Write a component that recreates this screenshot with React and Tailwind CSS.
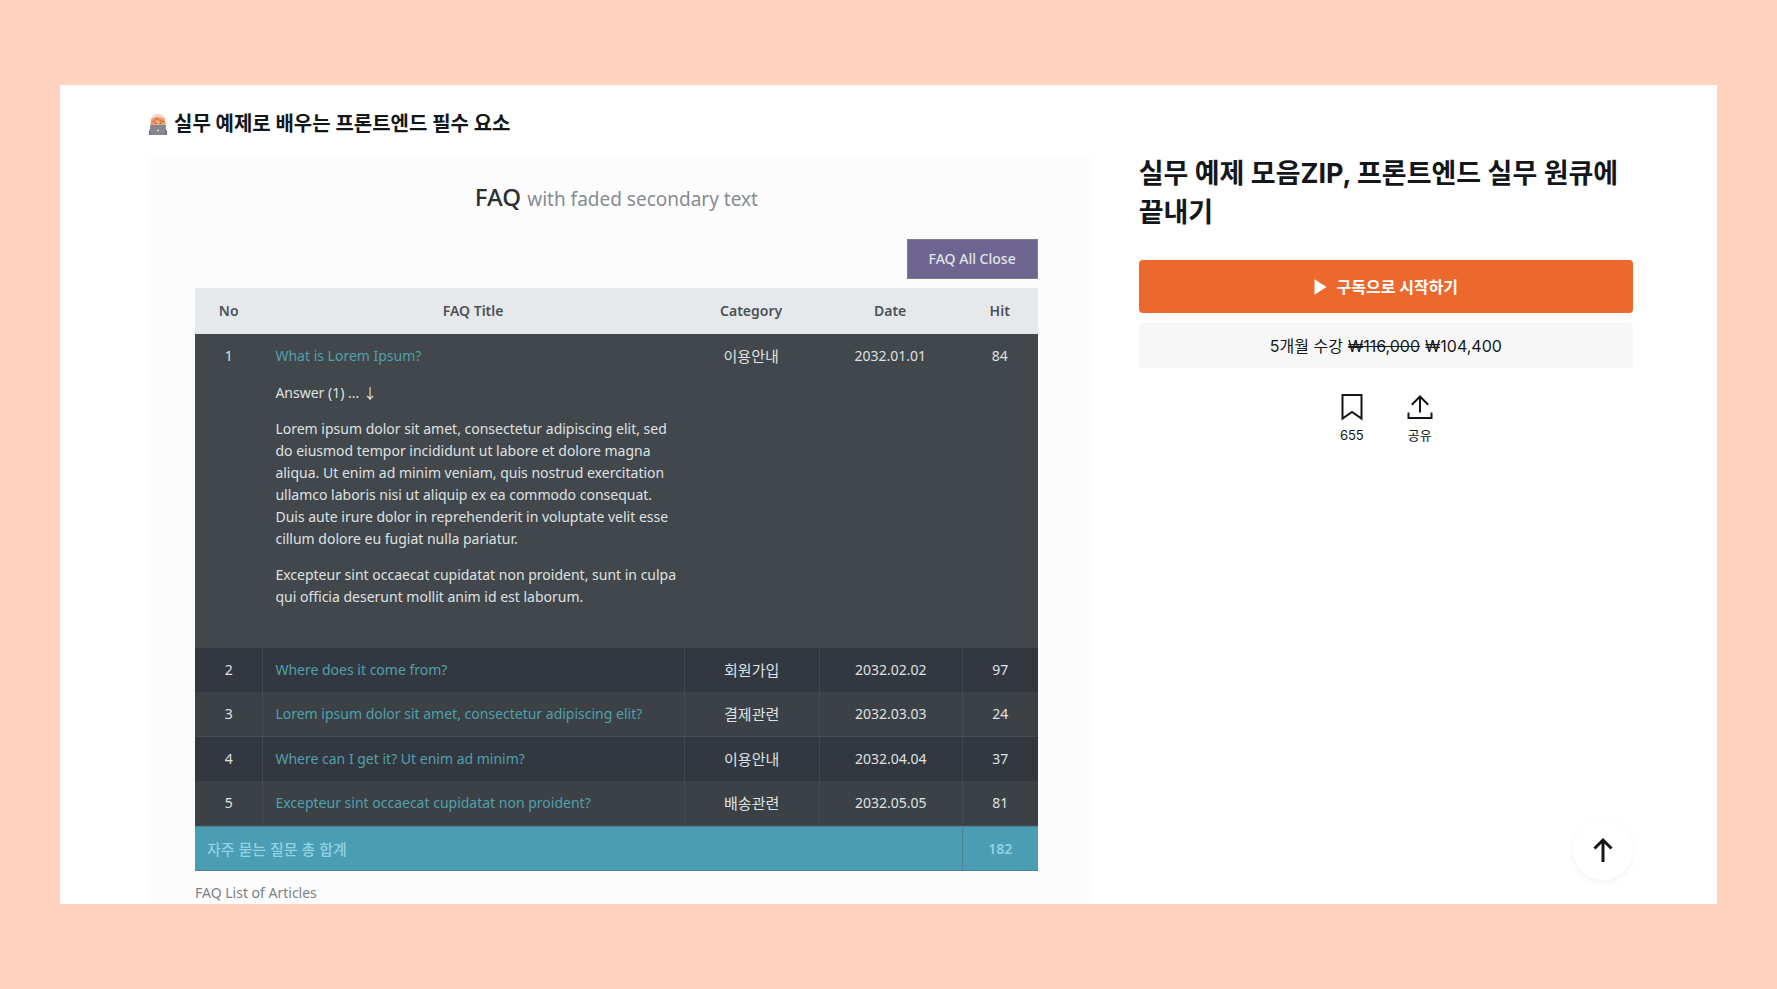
const faqs = [
  {
    no: 1,
    title: "What is Lorem Ipsum?",
    category: "이용안내",
    date: "2032.01.01",
    hit: 84,
    answer: [
      "Answer (1) ... ↓",
      "Lorem ipsum dolor sit amet, consectetur adipiscing elit, sed do eiusmod tempor incididunt ut labore et dolore magna aliqua. Ut enim ad minim veniam, quis nostrud exercitation ullamco laboris nisi ut aliquip ex ea commodo consequat. Duis aute irure dolor in reprehenderit in voluptate velit esse cillum dolore eu fugiat nulla pariatur.",
      "Excepteur sint occaecat cupidatat non proident, sunt in culpa qui officia deserunt mollit anim id est laborum.",
    ],
  },
  { no: 2, title: "Where does it come from?", category: "회원가입", date: "2032.02.02", hit: 97 },
  { no: 3, title: "Lorem ipsum dolor sit amet, consectetur adipiscing elit?", category: "결제관련", date: "2032.03.03", hit: 24 },
  { no: 4, title: "Where can I get it? Ut enim ad minim?", category: "이용안내", date: "2032.04.04", hit: 37 },
  { no: 5, title: "Excepteur sint occaecat cupidatat non proident?", category: "배송관련", date: "2032.05.05", hit: 81 },
];

function DeveloperIcon() {
  return (
    <svg viewBox="0 0 20 22" className="h-[22px] w-5 shrink-0" aria-hidden="true">
      <path d="M1 22c-.6-4 .6-6.500 4-7.500h10c3.400 1 4.600 3.500 4 7.500z" fill="#7466a6" />
      <path d="M2.500 13C2 6 4.500 1 10 1s8 5 7.500 12c-2 1.500-13 1.500-15 0z" fill="#ee9a6c" />
      <path d="M3.300 6C4.500 2.500 7 .8 10 .8s5.500 1.700 6.700 5.200C14 3.800 6 3.800 3.300 6z" fill="#f8d3c6" />
      <path d="M5 9c2-.5 3.500-2 4-4 1.200 2 3.500 3.400 6 4 .2 4-1.700 6.500-5 6.500S4.800 13 5 9z" fill="#f3a676" />
      <path d="M4.500 8.800C6.500 8.200 8 7 8.600 4.800c1.500 2.200 4 3.300 7.400 4.200" fill="none" stroke="#b5652f" strokeWidth="1" />
      <circle cx="7.500" cy="10.200" r=".8" fill="#6b4a30" />
      <circle cx="12.500" cy="10.200" r=".8" fill="#6b4a30" />
      <path d="M3 12h14a1 1 0 0 1 1 1L17 22H3l-1-9a1 1 0 0 1 1-1z" fill="#85878e" />
      <circle cx="10" cy="17.500" r="1" fill="#e3e4e8" />
    </svg>
  );
}

function FaqRow({ faq }) {
  const open = Boolean(faq.answer);
  const odd = faq.no % 2 === 1;
  const tone = open ? "bg-[#42474b]" : odd ? "bg-[#3c4146]" : "bg-[#333840]";
  const edge = !open && odd ? "border-b border-[#454b50]" : "border-[#414950]";
  const cell = `px-3 py-[11px] text-center ${edge} ${open ? "" : "border-l"}`;
  return (
    <tr className={`${tone} align-top`}>
      <td className={`px-3 py-[11px] text-center ${edge}`}>{faq.no}</td>
      <td className={`py-[11px] pr-1 ${edge} ${open ? "pl-[13px]" : "border-l pl-3"}`}>
        <a href="#faq" className="text-[#4fa0ab]">{faq.title}</a>
        {open && (
          <div className="flex flex-col gap-[14px] pt-[15px] pb-[29px]">
            {faq.answer.map((text) => (
              <p key={text}>{text}</p>
            ))}
          </div>
        )}
      </td>
      <td className={`${cell} text-[15px]`}>{faq.category}</td>
      <td className={cell}>{faq.date}</td>
      <td className={cell}>{faq.hit}</td>
    </tr>
  );
}

function FaqPanel() {
  return (
    <section className="flex flex-1 flex-col bg-[#fcfcfd] pt-5 pr-[53px] pl-[47px] font-['Noto_Sans','Noto_Sans_CJK_KR',sans-serif]">
      <h2 className="text-center text-2xl leading-10 font-medium text-[#2b3036]">
        FAQ <small className="text-[19px] font-normal text-[#858c93]">with faded secondary text</small>
      </h2>
      <button type="button" className="mt-5 mb-[9px] h-10 w-[131px] self-end border border-[#7d7f84] bg-[#6d648f] text-sm font-medium text-[#e4e4ea]">
        FAQ All Close
      </button>
      <table className="w-full table-fixed border-separate border-spacing-0 text-sm leading-[22px] text-[#dfe1e3]">
        <caption className="caption-bottom pt-[11px] text-left text-[#7c8187]">FAQ List of Articles</caption>
        <colgroup>
          <col className="w-[8%]" />
          <col className="w-[50%]" />
          <col className="w-[16%]" />
          <col className="w-[17%]" />
          <col className="w-[9%]" />
        </colgroup>
        <thead>
          <tr className="h-[46px] bg-[#e5e9ec] text-[#4d5156]">
            <th className="font-semibold">No</th>
            <th className="font-semibold">FAQ Title</th>
            <th className="font-semibold">Category</th>
            <th className="font-semibold">Date</th>
            <th className="font-semibold">Hit</th>
          </tr>
        </thead>
        <tbody>
          {faqs.map((faq) => (
            <FaqRow key={faq.no} faq={faq} />
          ))}
        </tbody>
        <tfoot>
          <tr className="h-[45px] bg-[#4a9db3] text-[#8fd3e0]">
            <td colSpan={4} className="border-y border-[#4b8391] px-3 text-[15px] font-medium">자주 묻는 질문 총 합계</td>
            <td className="border-y border-l border-[#4b8391] text-center font-semibold">182</td>
          </tr>
        </tfoot>
      </table>
    </section>
  );
}

function Sidebar() {
  return (
    <aside className="pt-[69px]">
      <h1 className="text-[27px] leading-[39px] font-bold">실무 예제 모음ZIP, 프론트엔드 실무 원큐에 끝내기</h1>
      <button type="button" className="mt-7 flex h-[53px] w-full items-center justify-center gap-[10px] rounded bg-[#ed682d] text-base font-bold text-white">
        <svg viewBox="0 0 13 16" className="h-4 w-[13px]" fill="currentColor" aria-hidden="true">
          <path d="M.5.200v15.600L12.500 8z" />
        </svg>
        구독으로 시작하기
      </button>
      <p className="mt-[10px] flex h-[45px] items-center justify-center gap-[5px] rounded bg-[#f7f7f7] text-base">
        <span>5개월 수강</span>
        <del>₩116,000</del>
        <span>₩104,400</span>
      </p>
      <div className="mt-6 flex justify-center gap-10 text-[13px] leading-5">
        <button type="button" className="flex w-7 flex-col items-center gap-[3px]">
          <svg viewBox="0 0 30 30" className="size-[30px]" fill="none" stroke="currentColor" strokeWidth="2" aria-hidden="true">
            <path d="M5.500 3h19v23.500L15 20l-9.500 6.500z" />
          </svg>
          655
        </button>
        <button type="button" className="flex w-7 flex-col items-center gap-[3px]">
          <svg viewBox="0 0 30 30" className="size-[30px]" fill="none" stroke="currentColor" strokeWidth="2" aria-hidden="true">
            <path d="M3.500 20.500V26h23v-5.500M15 20.500V4.500M6.800 12.700 15 4.500l8.200 8.200" />
          </svg>
          공유
        </button>
      </div>
    </aside>
  );
}

export default function App() {
  return (
    <div className="flex min-h-screen bg-[#fed2be] px-15 pt-[85px] pb-[86px] font-['Inter','Noto_Sans_CJK_KR',sans-serif] text-[#14171a]">
      <main className="relative grid flex-1 grid-cols-[942fr_494fr] gap-12 bg-white pr-[84px] pl-22">
        <div className="flex flex-col">
          <h2 className="flex h-[72px] items-center gap-[6px] pt-[6px] text-xl font-bold">
            <DeveloperIcon />
            실무 예제로 배우는 프론트엔드 필수 요소
          </h2>
          <FaqPanel />
        </div>
        <Sidebar />
        <button
          type="button"
          aria-label="맨 위로"
          className="absolute right-[84px] bottom-6 flex size-15 items-center justify-center rounded-full bg-white shadow-[0_2px_6px_rgba(0,0,0,0.06)]"
        >
          <svg viewBox="0 0 24 28" className="h-7 w-6" fill="none" stroke="currentColor" strokeWidth="3" aria-hidden="true">
            <path d="M12 26V4M3.500 12.500 12 4l8.500 8.500" />
          </svg>
        </button>
      </main>
    </div>
  );
}
